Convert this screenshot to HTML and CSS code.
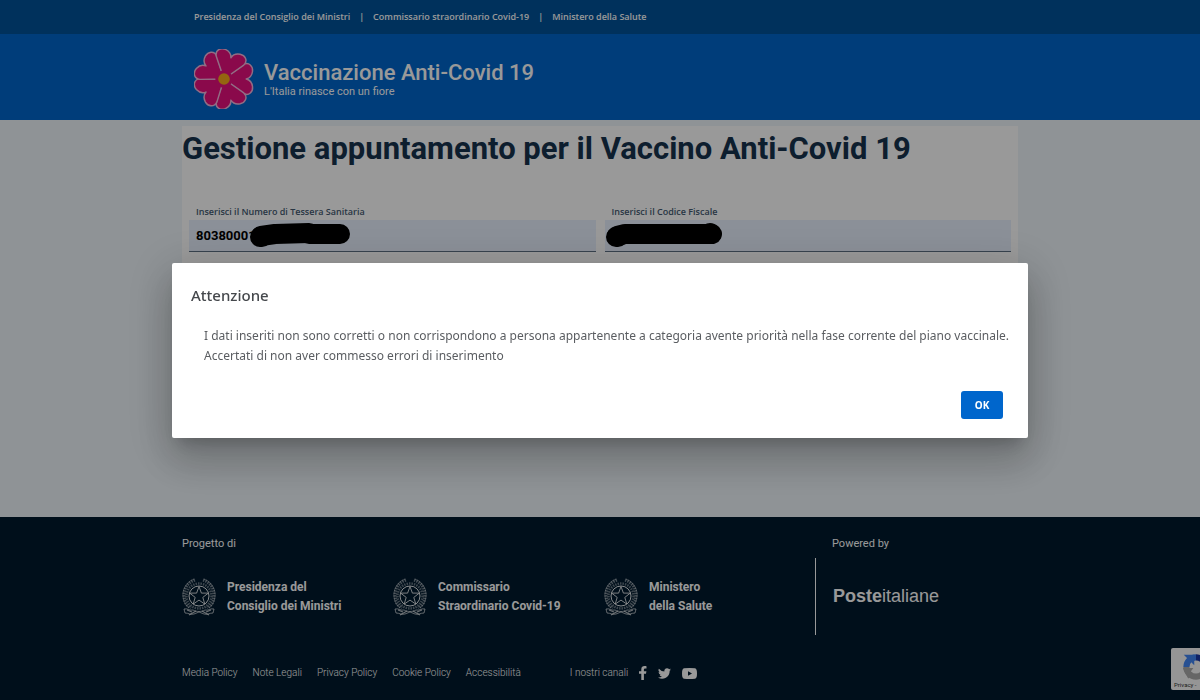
FILE: index.html
```html
<!DOCTYPE html>
<html lang="it">
<head>
  <meta charset="UTF-8">
  <meta name="viewport" content="width=device-width, initial-scale=1.0">
  <title>Vaccinazione Anti-Covid 19</title>
  <link rel="stylesheet" href="styles.css">
</head>
<body>
  <!-- emblem shared by the three footer partners -->
  <svg class="sprite" aria-hidden="true">
    <symbol id="emblem" viewBox="0 0 34 38">
      <g fill="none" stroke="currentColor">
        <circle cx="17" cy="18" r="12.500" stroke-width="2.500" stroke-dasharray="1.500 1" opacity=".4"/>
        <circle cx="17" cy="18" r="10" stroke-width=".9"/>
        <path d="M17 8.500l2.400 6.600h6.900l-5.500 4.300 2 6.700-5.800-4-5.800 4 2-6.700-5.500-4.300h6.900z" stroke-width="1" opacity=".8"/>
        <path d="M13 2C6 4 1.500 11 2 18s3 10 7 12M21 2c7 2 11.500 9 11 16s-3 10-7 12" stroke-width="3" stroke-dasharray="1.500 1" opacity=".45"/>
        <path d="M12 1C4 4 0 12 1 19s4 9 6 11M22 1c8 3 12 11 11 18s-4 9-6 11" stroke-width=".6" opacity=".6"/>
        <path d="M2 31c4-1 5 2 9 1 4 2 8 2 12 0 4 1 5-2 9-1l-1 4c-4 0-5 2-9 1l-5-2-5 2c-4 1-5-1-9-1z" stroke-width=".9" opacity=".7"/>
        <path d="M7 37l7-4M27 37l-7-4M5 32l5 2M29 32l-5 2" stroke-width="1.100" opacity=".7"/>
      </g>
    </symbol>
  </svg>

  <header>
    <nav class="topbar">
      <div class="container topbar-links">
        <a href="#">Presidenza del Consiglio dei Ministri</a>
        <span>|</span>
        <a href="#">Commissario straordinario Covid-19</a>
        <span>|</span>
        <a href="#">Ministero della Salute</a>
      </div>
    </nav>
    <div class="brandbar">
      <div class="container brand">
        <svg class="flower" viewBox="-31 -31 62 62" aria-hidden="true">
          <g fill="#e6107e" stroke="#f3b6dc" stroke-width="1.500" stroke-linejoin="round">
            <path id="petal" d="M0 0L-15-20C-18-26-13-30-8-29.500C-4-29-1-27 0-23C1-27 4-29 8-29.500C13-30 18-26 15-20Z" transform="rotate(90)"/>
            <use href="#petal" transform="rotate(72)"/>
            <use href="#petal" transform="rotate(144)"/>
            <use href="#petal" transform="rotate(216)"/>
            <use href="#petal" transform="rotate(288)"/>
          </g>
          <circle r="9" fill="#e6107e"/>
          <circle r="6" fill="#f7a81b"/>
        </svg>
        <div>
          <div class="brand-name">Vaccinazione Anti-Covid 19</div>
          <div class="brand-claim">L'Italia rinasce con un fiore</div>
        </div>
      </div>
    </div>
  </header>

  <main>
    <div class="container panel">
      <h1>Gestione appuntamento per il Vaccino Anti-Covid 19</h1>
      <form class="fields">
        <div class="field">
          <label for="tessera">Inserisci il Numero di Tessera Sanitaria</label>
          <input type="text" id="tessera" value="80380001">
          <svg class="mask mask-tessera" viewBox="0 0 102 26" aria-hidden="true">
            <path d="M12 14L26 12L60 11" stroke-width="20"/>
            <path d="M11 15L13 15M60 12L91 12" stroke-width="20"/>
          </svg>
        </div>
        <div class="field">
          <label for="codice">Inserisci il Codice Fiscale</label>
          <input type="text" id="codice">
          <svg class="mask mask-codice" viewBox="0 0 118 26" aria-hidden="true">
            <path d="M12 14L20 12L36 12L106 12" stroke-width="20"/>
            <path d="M11 15L13 15M105 11L107 12" stroke-width="20"/>
          </svg>
        </div>
      </form>
    </div>
  </main>

  <footer>
    <div class="container">
      <div class="partners">
        <p class="partners-label">Progetto di</p>
        <p class="powered-label">Powered by</p>
        <div class="partner">
          <svg class="emblem" aria-hidden="true"><use href="#emblem"/></svg>
          <strong>Presidenza del<br>Consiglio dei Ministri</strong>
        </div>
        <div class="partner">
          <svg class="emblem" aria-hidden="true"><use href="#emblem"/></svg>
          <strong>Commissario<br>Straordinario Covid-19</strong>
        </div>
        <div class="partner">
          <svg class="emblem" aria-hidden="true"><use href="#emblem"/></svg>
          <strong>Ministero<br>della Salute</strong>
        </div>
        <div class="poste"><b>Poste</b>italiane</div>
      </div>

      <div class="footer-links">
        <a href="#">Media Policy</a>
        <a href="#">Note Legali</a>
        <a href="#">Privacy Policy</a>
        <a href="#">Cookie Policy</a>
        <a href="#">Accessibilità</a>
        <div class="socials">
          <span>I nostri canali</span>
          <a href="#" aria-label="Facebook">
            <svg width="8" height="14" viewBox="0 0 8 14"><path d="M2.300 14V7.800H0V5.200h2.300V3.300C2.300 1.100 3.600 0 5.500 0c.9 0 1.800.1 2 .2v2.200H6.200c-1 0-1.300.6-1.300 1.300v1.500h2.500L7 7.800H4.900V14z"/></svg>
          </a>
          <a href="#" aria-label="Twitter">
            <svg width="13" height="13" viewBox="0 0 24 24"><path d="M24 4.600a10 10 0 0 1-2.800.8 4.900 4.900 0 0 0 2.200-2.700c-1 .6-2 1-3.100 1.200a4.900 4.900 0 0 0-8.400 4.500A14 14 0 0 1 1.700 3.200a4.900 4.900 0 0 0 1.500 6.500 4.900 4.900 0 0 1-2.200-.6v.1a4.900 4.900 0 0 0 3.900 4.800 5 5 0 0 1-2.200.1 4.900 4.900 0 0 0 4.600 3.400A9.900 9.900 0 0 1 0 19.500 14 14 0 0 0 21.500 7.100 10 10 0 0 0 24 4.600z"/></svg>
          </a>
          <a href="#" aria-label="YouTube">
            <svg width="15" height="11" viewBox="0 0 15 11"><path fill-rule="evenodd" d="M2 .3Q7.500-.3 13 .3Q15 .6 15 5.500T13 10.700Q7.500 11.300 2 10.700Q0 10.400 0 5.500T2 .3zM6 3.200v4.600l4-2.300z"/></svg>
          </a>
        </div>
      </div>
    </div>
  </footer>

  <div class="recaptcha">
    <svg viewBox="0 0 32 32" aria-hidden="true">
      <g fill="none" stroke-width="7">
        <path d="M5 16A11 11 0 0 1 16 5" stroke="#4285f4"/>
        <path d="M16 5A11 11 0 0 1 27 16" stroke="#1c3aa9"/>
        <path d="M27 16A11 11 0 0 1 5 16" stroke="#ababab"/>
      </g>
      <path d="M2 2h12v12z" fill="#4285f4"/>
      <path d="M1 17h12l-3 4 3 4-6 4z" fill="#ababab"/>
    </svg>
    <span>Privacy -</span>
  </div>

  <div class="overlay">
    <div class="dialog" role="alertdialog" aria-labelledby="dialog-title">
      <h2 id="dialog-title">Attenzione</h2>
      <p>I dati inseriti non sono corretti o non corrispondono a persona appartenente a categoria avente priorità nella fase corrente del piano vaccinale.<br>Accertati di non aver commesso errori di inserimento</p>
      <div class="dialog-actions">
        <button type="button">OK</button>
      </div>
    </div>
  </div>
</body>
</html>
```
FILE: styles.css
```css
:root {
  --blue: #0066cc;
  --blue-dark: #005299;
  --navy: #001a2e;
  --page: #eef5fa;
}
* { box-sizing: border-box; margin: 0; padding: 0; }
body {
  display: flex;
  flex-direction: column;
  min-height: 100vh;
  background: var(--page);
  color: #17324d;
  font-family: Roboto, sans-serif;
}
a { color: inherit; text-decoration: none; }
.container { width: 100%; max-width: 836px; margin: 0 auto; }
.sprite { position: absolute; width: 0; height: 0; }

/* header */
header { color: #fff; }
.topbar { background: var(--blue-dark); }
.topbar-links {
  display: flex;
  align-items: center;
  gap: 9px;
  height: 34px;
  padding: 0 12px 2px;
  font: 600 9px "Open Sans", sans-serif;
}
.brandbar { background: var(--blue); }
.brand { display: flex; align-items: center; gap: 10px; height: 86px; padding: 4px 12px 0; }
.flower { width: 60px; height: 60px; }
.brand-name { font-size: 22px; line-height: 26px; font-weight: 500; }
.brand-claim { font-size: 11px; line-height: 12px; }

/* form */
main { flex: 1; padding-top: 6px; }
.panel { min-height: 240px; background: #fff; }
h1 { font-size: 31px; line-height: 46px; font-weight: 700; white-space: nowrap; }
.fields { display: grid; grid-template-columns: 1fr 1fr; gap: 9px; padding: 33px 7px 0; }
.field { position: relative; }
.field label { display: block; padding: 0 7px 1px; color: #455b71; font: 600 9px/14px "Open Sans", sans-serif; }
.field input {
  display: block;
  width: 100%;
  height: 32px;
  padding: 0 7px;
  border: 0;
  border-bottom: 1px solid #5c6f82;
  background: #e8f0fe;
  font: 700 13px Roboto, sans-serif;
}
.mask { position: absolute; top: 17px; height: 26px; fill: none; stroke: #000; stroke-linecap: round; stroke-linejoin: round; }
.mask-tessera { left: 60px; width: 102px; }
.mask-codice { left: 0; width: 118px; }

/* footer */
footer { padding: 19px 0; background: var(--navy); color: #fff; font-size: 10px; }
.partners { display: grid; grid-template-columns: 211px 211px 211px 1fr; row-gap: 6px; }
.partners p { font-size: 11px; line-height: 16px; font-weight: 400; }
.partners-label { grid-column: span 3; }
.powered-label { padding-left: 17px; }
.partner { display: flex; align-items: center; gap: 11px; height: 77px; font-size: 12px; line-height: 19px; }
.emblem { width: 34px; height: 38px; }
.poste {
  display: flex;
  align-items: center;
  padding-left: 17px;
  border-left: 1px solid #fff;
  font: 18px "Liberation Sans", sans-serif;
}
.footer-links { display: flex; align-items: center; gap: 15px; margin-top: 30px; line-height: 16px; font-weight: 300; }
.socials { display: flex; align-items: center; gap: 11px; margin-left: 34px; }
.socials a { display: flex; }
.socials svg { fill: #fff; }

/* recaptcha badge, mostly tucked away on the right */
.recaptcha {
  position: fixed;
  right: 0;
  bottom: 10px;
  width: 29px;
  height: 42px;
  padding: 5px 0 0 3px;
  overflow: hidden;
  border-radius: 2px 0 0 2px;
  background: #f9f9f9;
  color: #333;
  font-size: 6px;
  line-height: 8px;
  white-space: nowrap;
}
.recaptcha svg { display: block; width: 28px; height: 28px; margin-left: 8px; }

/* dialog */
.overlay {
  position: fixed;
  inset: 0;
  display: flex;
  align-items: center;
  justify-content: center;
  background: rgba(0, 0, 0, .4);
}
.dialog {
  width: 100%;
  max-width: 856px;
  padding: 19px;
  border-radius: 2px;
  background: #fff;
  box-shadow: 0 11px 15px -7px rgba(0, 0, 0, .2), 0 9px 46px 8px rgba(0, 0, 0, .14), 0 24px 38px 3px rgba(0, 0, 0, .14);
  color: #5a5d61;
  font-family: "Noto Sans", sans-serif;
}
.dialog h2 { color: #45484c; font-size: 15px; line-height: 26px; font-weight: 500; }
.dialog p { padding: 18px 0 0 13px; font-size: 12px; line-height: 20px; white-space: nowrap; }
.dialog-actions { display: flex; justify-content: flex-end; padding: 25px 6px 0; }
.dialog button {
  width: 42px;
  height: 28px;
  border: 0;
  border-radius: 3px;
  background: var(--blue);
  color: #fff;
  font: 700 10px "Noto Sans", sans-serif;
}
```
